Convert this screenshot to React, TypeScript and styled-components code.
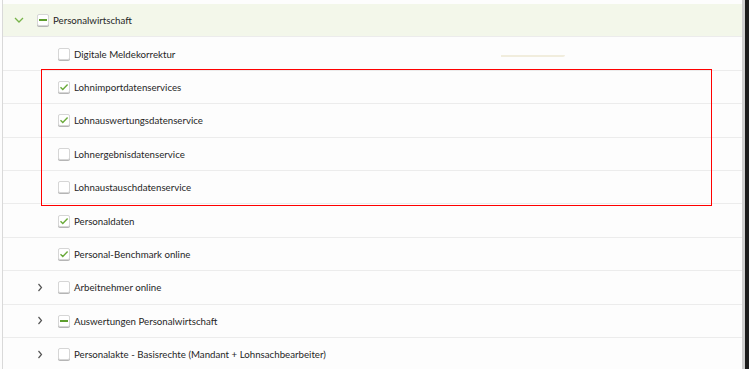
import React from "react";
import styled, { createGlobalStyle } from "styled-components";

const GlobalStyle = createGlobalStyle`
    html, body {
        margin: 0;
        padding: 0;
        background: #fdfdfd;
        overflow: hidden;
    }
    body {
        font-family: Lato, "Open Sans", "Liberation Sans", sans-serif;
    }
`;

type Node = {
    label: string;
    level: number;
    toggle?: "open" | "closed";
    state: "on" | "off" | "partial";
    hint?: boolean;
};

const nodes: Node[] = [
    { label: "Personalwirtschaft", level: 0, toggle: "open", state: "partial" },
    { label: "Digitale Meldekorrektur", level: 1, state: "off", hint: true },
    { label: "Lohnimportdatenservices", level: 1, state: "on" },
    { label: "Lohnauswertungsdatenservice", level: 1, state: "on" },
    { label: "Lohnergebnisdatenservice", level: 1, state: "off" },
    { label: "Lohnaustauschdatenservice", level: 1, state: "off" },
    { label: "Personaldaten", level: 1, state: "on" },
    { label: "Personal-Benchmark online", level: 1, state: "on" },
    { label: "Arbeitnehmer online", level: 1, toggle: "closed", state: "off" },
    { label: "Auswertungen Personalwirtschaft", level: 1, toggle: "closed", state: "partial" },
    { label: "Personalakte - Basisrechte (Mandant + Lohnsachbearbeiter)", level: 1, toggle: "closed", state: "off" },
];

const Frame = styled.div`
    display: flex;
    width: 749px;
    height: 369px;
`;

const Tree = styled.div`
    position: relative;
    flex: 1;
    margin-left: 2px;
    padding-top: 4px;
    border-left: 1px solid #d9d9d9;
    background: #fdfdfd;
`;

const Track = styled.div`
    width: 3px;
    background: #cfcfcf;
`;

const Edge = styled.div`
    width: 4px;
    background: #1c1c1c;
`;

const Row = styled.div<{ $level: number; $head?: boolean }>`
    display: flex;
    align-items: center;
    box-sizing: border-box;
    height: 33.4px;
    padding-left: ${p => 5 + p.$level * 21}px;
    border-bottom: 1px solid #ececec;
    background: ${p => (p.$head ? "#f3f7ea" : "#fdfdfd")};
`;

const Toggle = styled.span`
    display: flex;
    align-items: center;
    justify-content: center;
    width: 22px;
    height: 22px;
`;

const Box = styled.span`
    display: flex;
    align-items: center;
    justify-content: center;
    box-sizing: border-box;
    width: 12px;
    height: 12px;
    margin-left: 7px;
    border: 1px solid #d6d6d6;
    border-radius: 2px;
    background: #fff;
    box-shadow: 0 1px 0 #b5b5b5;
`;

const Dash = styled.span`
    width: 8px;
    height: 2px;
    background: #5e9e2e;
`;

const Label = styled.span`
    margin-left: 4px;
    font-size: 9.7px;
    color: #262626;
    white-space: nowrap;
`;

const Hint = styled.span`
    width: 64px;
    height: 2px;
    margin-left: auto;
    margin-right: 177px;
    margin-top: 5px;
    background: #f1eddd;
    border-radius: 0 0 3px 0;
`;

const Marker = styled.div`
    position: absolute;
    left: 38px;
    top: 69px;
    width: 669px;
    height: 135px;
    border: 1px solid #ff0000;
    pointer-events: none;
`;

const Chevron = ({ open }: { open: boolean }) =>
    open ? (
        <svg width="10" height="6" viewBox="0 0 10 6">
            <path d="M1 1l4 4 4-4" fill="none" stroke="#78b44a" strokeWidth="1.3" />
        </svg>
    ) : (
        <svg width="6" height="9" viewBox="0 0 6 9">
            <path d="M1.5 1l3 3.5-3 3.5" fill="none" stroke="#555" strokeWidth="1.2" />
        </svg>
    );

const Check = () => (
    <svg width="10" height="8" viewBox="0 0 10 8">
        <path d="M1.5 4.2l2.3 2.3 4.8-5" fill="none" stroke="#6aaa3a" strokeWidth="1.4" />
    </svg>
);

export default function App() {
    return (
        <>
            <GlobalStyle />
            <Frame>
                <Tree>
                    {nodes.map((n, i) => (
                        <Row key={i} $level={n.level} $head={n.level === 0}>
                            <Toggle>{n.toggle && <Chevron open={n.toggle === "open"} />}</Toggle>
                            <Box>
                                {n.state === "on" && <Check />}
                                {n.state === "partial" && <Dash />}
                            </Box>
                            <Label>{n.label}</Label>
                            {n.hint && <Hint />}
                        </Row>
                    ))}
                    <Marker />
                </Tree>
                <Track />
                <Edge />
            </Frame>
        </>
    );
}
